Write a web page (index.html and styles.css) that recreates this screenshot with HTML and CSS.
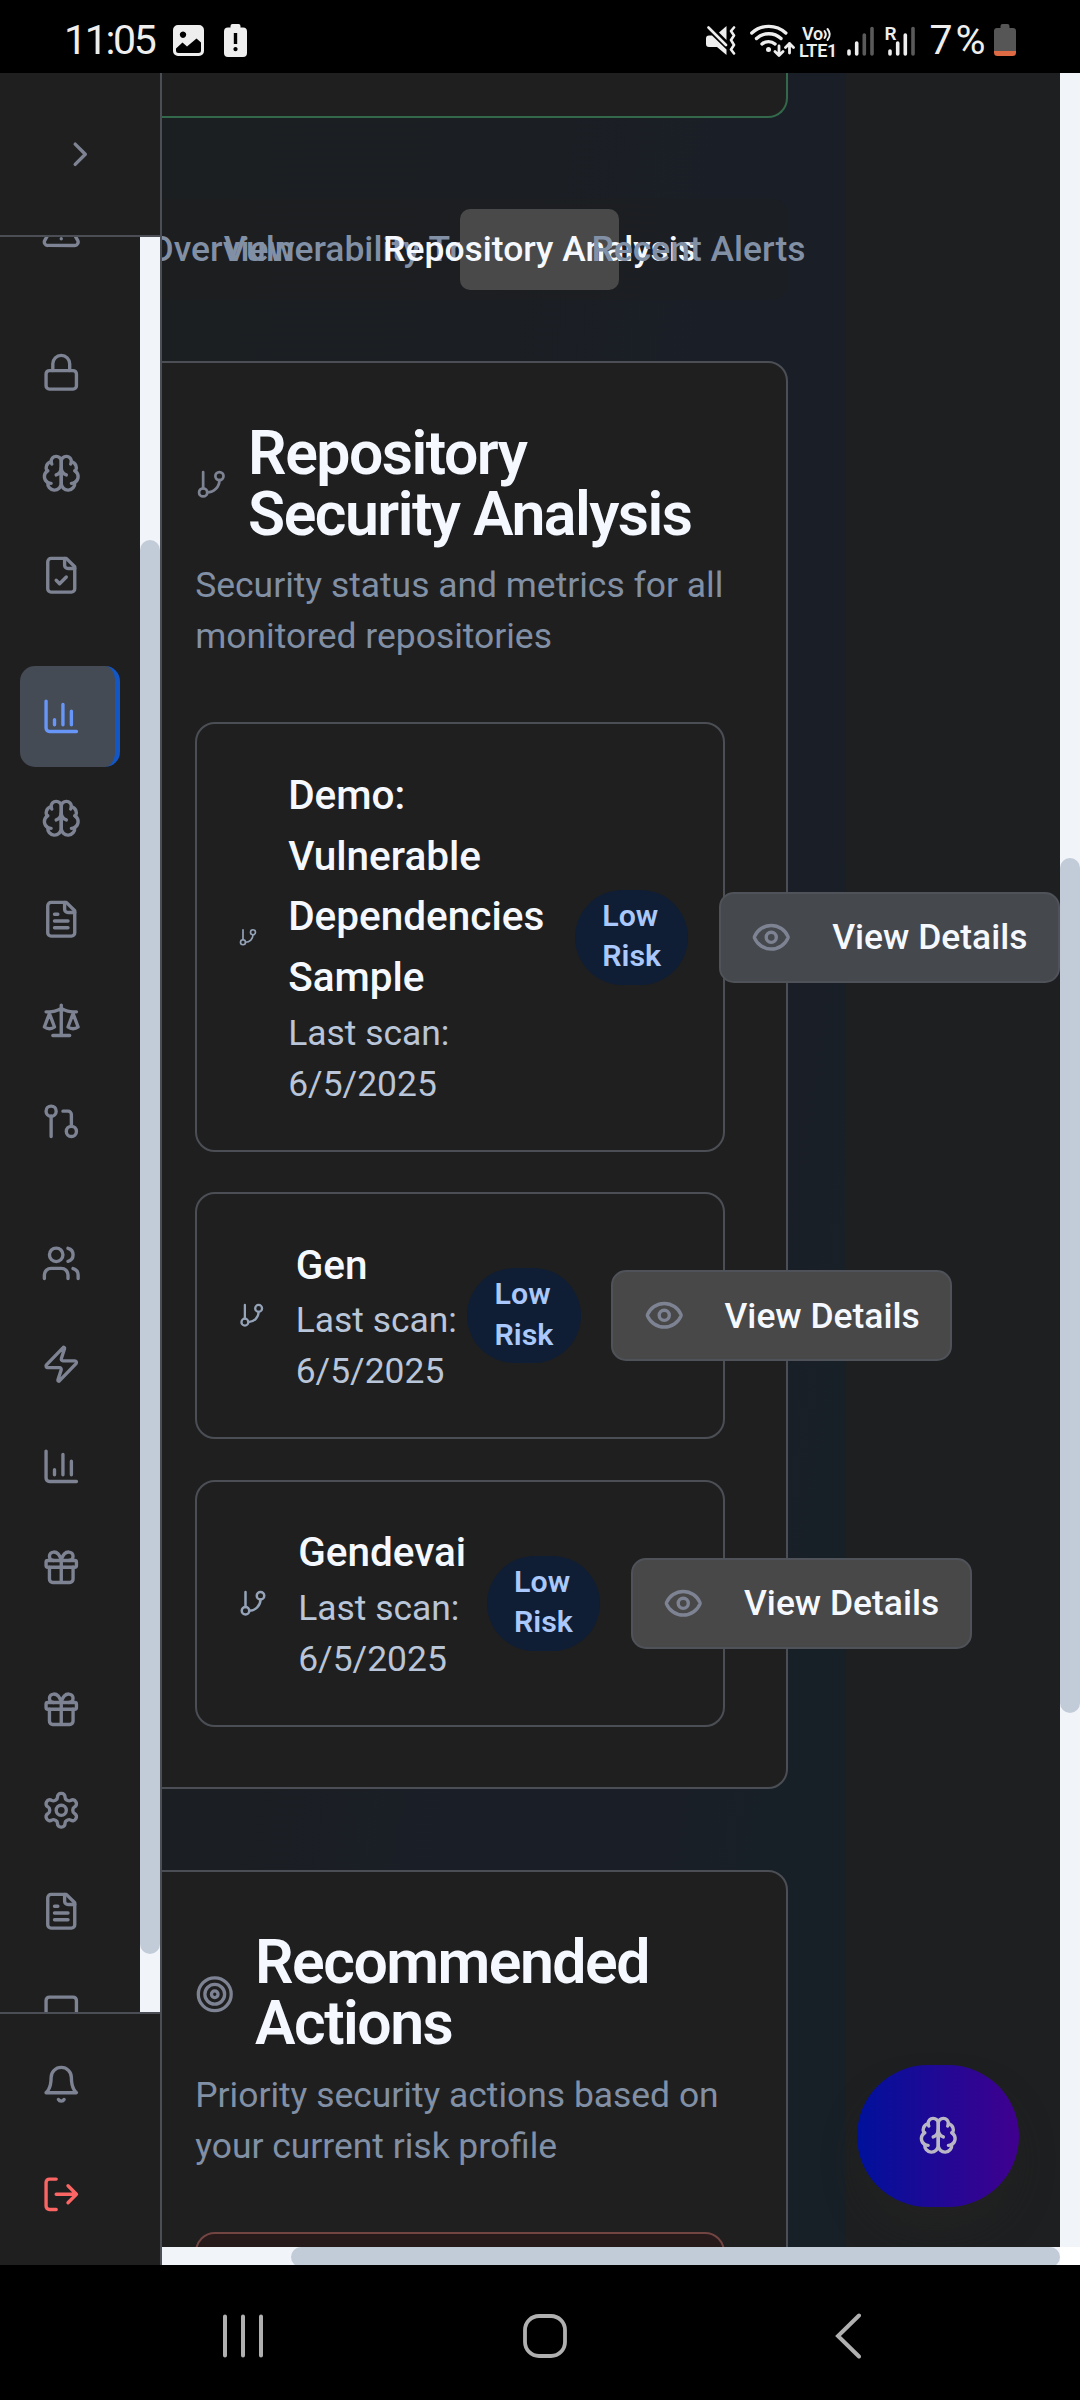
FILE: index.html
```html
<!DOCTYPE html>
<html lang="en">
<head>
<meta charset="utf-8">
<title>Security Dashboard</title>
<link rel="stylesheet" href="styles.css">
</head>
<body>
<svg class="sprite" aria-hidden="true">
  <symbol id="chevron" viewBox="0 0 24 24"><path d="m9 18 6-6-6-6"/></symbol>
  <symbol id="alert" viewBox="0 0 24 24"><path d="m21.73 18-8-14a2 2 0 0 0-3.48 0l-8 14A2 2 0 0 0 4 21h16a2 2 0 0 0 1.73-3M12 9v4M12 17h.01"/></symbol>
  <symbol id="lock" viewBox="0 0 24 24"><rect x="3" y="11" width="18" height="11" rx="2"/><path d="M7 11V7a5 5 0 0 1 10 0v4"/></symbol>
  <symbol id="brain" viewBox="0 0 24 24"><path d="M12 5a3 3 0 1 0-5.997.125 4 4 0 0 0-2.526 5.77 4 4 0 0 0 .556 6.588A4 4 0 1 0 12 18Z"/><path d="M12 5a3 3 0 1 1 5.997.125 4 4 0 0 1 2.526 5.77 4 4 0 0 1-.556 6.588A4 4 0 1 1 12 18Z"/><path d="M15 13a4.5 4.5 0 0 1-3-4 4.5 4.5 0 0 1-3 4M17.599 6.5a3 3 0 0 0 .399-1.375M6.003 5.125A3 3 0 0 0 6.401 6.5M3.477 10.896a4 4 0 0 1 .585-.396M19.938 10.5a4 4 0 0 1 .585.396M6 18a4 4 0 0 1-1.967-.516M19.967 17.484A4 4 0 0 1 18 18"/></symbol>
  <symbol id="file-check" viewBox="0 0 24 24"><path d="M15 2H6a2 2 0 0 0-2 2v16a2 2 0 0 0 2 2h12a2 2 0 0 0 2-2V7Z"/><path d="M14 2v4a2 2 0 0 0 2 2h4M9 15l2 2 4-4"/></symbol>
  <symbol id="chart" viewBox="0 0 24 24"><path d="M3 3v16a2 2 0 0 0 2 2h16M18 17V9M13 17V5M8 17v-3"/></symbol>
  <symbol id="file-text" viewBox="0 0 24 24"><path d="M15 2H6a2 2 0 0 0-2 2v16a2 2 0 0 0 2 2h12a2 2 0 0 0 2-2V7Z"/><path d="M14 2v4a2 2 0 0 0 2 2h4M10 9H8M16 13H8M16 17H8"/></symbol>
  <symbol id="scale" viewBox="0 0 24 24"><path d="m16 16 3-8 3 8c-.87.65-1.92 1-3 1s-2.13-.35-3-1ZM2 16l3-8 3 8c-.87.65-1.92 1-3 1s-2.13-.35-3-1ZM7 21h10M12 3v18M3 7h2c2 0 5-1 7-2 2 1 5 2 7 2h2"/></symbol>
  <symbol id="pull" viewBox="0 0 24 24"><circle cx="18" cy="18" r="3"/><circle cx="6" cy="6" r="3"/><path d="M13 6h3a2 2 0 0 1 2 2v7M6 9v12"/></symbol>
  <symbol id="users" viewBox="0 0 24 24"><path d="M16 21v-2a4 4 0 0 0-4-4H6a4 4 0 0 0-4 4v2"/><circle cx="9" cy="7" r="4"/><path d="M22 21v-2a4 4 0 0 0-3-3.87M16 3.13a4 4 0 0 1 0 7.75"/></symbol>
  <symbol id="zap" viewBox="0 0 24 24"><path d="M4 14a1 1 0 0 1-.78-1.63l9.9-10.2a.5.5 0 0 1 .86.46l-1.92 6.02A1 1 0 0 0 13 10h7a1 1 0 0 1 .78 1.63l-9.9 10.2a.5.5 0 0 1-.86-.46l1.92-6.02A1 1 0 0 0 11 14z"/></symbol>
  <symbol id="gift" viewBox="0 0 24 24"><rect x="3" y="8" width="18" height="4" rx="1"/><path d="M12 8v13M19 12v7a2 2 0 0 1-2 2H7a2 2 0 0 1-2-2v-7M7.5 8a2.5 2.5 0 0 1 0-5A4.8 8 0 0 1 12 8a4.8 8 0 0 1 4.5-5 2.5 2.5 0 0 1 0 5"/></symbol>
  <symbol id="settings" viewBox="0 0 24 24"><path d="M12.22 2h-.44a2 2 0 0 0-2 2v.18a2 2 0 0 1-1 1.73l-.43.25a2 2 0 0 1-2 0l-.15-.08a2 2 0 0 0-2.73.73l-.22.38a2 2 0 0 0 .73 2.73l.15.1a2 2 0 0 1 1 1.72v.51a2 2 0 0 1-1 1.74l-.15.09a2 2 0 0 0-.73 2.73l.22.38a2 2 0 0 0 2.73.73l.15-.08a2 2 0 0 1 2 0l.43.25a2 2 0 0 1 1 1.73V20a2 2 0 0 0 2 2h.44a2 2 0 0 0 2-2v-.18a2 2 0 0 1 1-1.73l.43-.25a2 2 0 0 1 2 0l.15.08a2 2 0 0 0 2.73-.73l.22-.39a2 2 0 0 0-.73-2.73l-.15-.08a2 2 0 0 1-1-1.74v-.5a2 2 0 0 1 1-1.74l.15-.09a2 2 0 0 0 .73-2.73l-.22-.38a2 2 0 0 0-2.73-.73l-.15.08a2 2 0 0 1-2 0l-.43-.25a2 2 0 0 1-1-1.73V4a2 2 0 0 0-2-2z"/><circle cx="12" cy="12" r="3"/></symbol>
  <symbol id="message" viewBox="0 0 24 24"><path d="M21 15a2 2 0 0 1-2 2H7l-4 4V5a2 2 0 0 1 2-2h14a2 2 0 0 1 2 2z"/></symbol>
  <symbol id="bell" viewBox="0 0 24 24"><path d="M6 8a6 6 0 0 1 12 0c0 7 3 9 3 9H3s3-2 3-9M10.3 21a1.94 1.94 0 0 0 3.4 0"/></symbol>
  <symbol id="logout" viewBox="0 0 24 24"><path d="M9 21H5a2 2 0 0 1-2-2V5a2 2 0 0 1 2-2h4M16 17l5-5-5-5M21 12H9"/></symbol>
  <symbol id="branch" viewBox="0 0 24 24"><path d="M6 3v12M18 9a9 9 0 0 1-9 9"/><circle cx="18" cy="6" r="3"/><circle cx="6" cy="18" r="3"/></symbol>
  <symbol id="eye" viewBox="0 0 24 24"><path d="M2.062 12.348a1 1 0 0 1 0-.696 10.75 10.75 0 0 1 19.876 0 1 1 0 0 1 0 .696 10.75 10.75 0 0 1-19.876 0"/><circle cx="12" cy="12" r="3"/></symbol>
  <symbol id="target" viewBox="0 0 24 24"><circle cx="12" cy="12" r="10"/><circle cx="12" cy="12" r="6"/><circle cx="12" cy="12" r="2"/></symbol>
</svg>

<header class="statusbar">
  <div class="status-left">
    <span class="clock">11:05</span>
    <svg class="s-image" viewBox="0 0 31 31"><path fill="#eee" fill-rule="evenodd" d="M5 0H26a5 5 0 0 1 5 5V26a5 5 0 0 1-5 5H5a5 5 0 0 1-5-5V5a5 5 0 0 1 5-5ZM3 23.500V25.500a2.500 2.500 0 0 0 2.500 2.500H25.500a2.500 2.500 0 0 0 2.500-2.500V17.500L23.500 13.500 14 21.500 9.500 17.500ZM10 6.500a3.200 3.200 0 1 0 .01 0Z"/></svg>
    <svg class="s-batt" viewBox="0 0 23 33"><path fill="#eee" fill-rule="evenodd" d="M8.500 0h6a2 2 0 0 1 2 2v1.500H19a4 4 0 0 1 4 4V29a4 4 0 0 1-4 4H4a4 4 0 0 1-4-4V7.500a4 4 0 0 1 4-4H6.500V2a2 2 0 0 1 2-2ZM9.800 9v11h3.400V9ZM11.500 23a2.100 2.100 0 1 0 .01 0Z"/></svg>
  </div>
  <div class="status-right">
    <svg class="s-mute" viewBox="0 0 30 30"><g fill="#eee"><path d="M3 9.500H6L20.500 23.500V29L11 21H3a3 3 0 0 1-3-3v-5.500a3 3 0 0 1 3-3Z"/><path d="M13 6.500 20.500 0V14Z"/></g><g fill="none" stroke="#eee" stroke-width="2.600" stroke-linecap="round" stroke-linejoin="round"><path d="M2.500 1.500 20 19M28 1.500l-3 3.500 3 4.500-3 4.500 3 5-3 4.500 3 4"/></g></svg>
    <svg class="s-wifi" viewBox="0 0 45 33"><g fill="none" stroke="#eee" stroke-width="3.400" stroke-linecap="round"><path d="M1.800 9a25 25 0 0 1 34 0M6.500 14.500a18 18 0 0 1 24.500 0M12 20a10 10 0 0 1 13 0"/></g><circle cx="18.500" cy="25.500" r="2.500" fill="#eee"/><g fill="none" stroke="#eee" stroke-width="2.800" stroke-linecap="round" stroke-linejoin="round"><path d="M29 22v9.500M25 27.500l4 4 4-4M39.500 29V19.500M35.500 23.500l4-4 4 4"/></g></svg>
    <div class="volte"><span>Vo<svg viewBox="0 0 11 16"><path d="M1.500 5q2.500 3.500 0 7M4.500 3q4.500 5.500 0 11" fill="none" stroke="#eee" stroke-width="2" stroke-linecap="round"/></svg></span><span>LTE1</span></div>
    <svg class="s-sig1" viewBox="0 0 27 30"><g stroke-width="3.600" stroke-linecap="round"><path stroke="#eee" d="M2 25v3M9.700 17v11"/><path stroke="#5a5a5a" d="M17.300 9v19M25 2.500V28"/></g></svg>
    <div class="roam"><span>R</span><svg viewBox="0 0 27 30"><g stroke-width="3.600" stroke-linecap="round"><path stroke="#eee" d="M2 25v3M9.700 17v11M17.300 9v19"/><path stroke="#5a5a5a" d="M25 2.500V28"/></g></svg></div>
    <span class="percent">7%</span>
    <svg class="s-power" viewBox="0 0 22 32"><path fill="#565656" d="M8.500 0h5a2 2 0 0 1 2 2v2H19a3 3 0 0 1 3 3V27H0V7a3 3 0 0 1 3-3H6.500V2a2 2 0 0 1 2-2Z"/><path fill="#de6b43" d="M0 27H22v1.500a3.500 3.500 0 0 1-3.500 3.500H3.500A3.500 3.500 0 0 1 0 28.500Z"/></svg>
  </div>
</header>

<div class="app">
  <aside class="sidebar">
    <div class="sidebar-head"><svg class="icon"><use href="#chevron"/></svg></div>
    <div class="sidebar-scroll">
      <nav class="nav">
        <div class="group"><a class="item"><svg class="icon"><use href="#alert"/></svg></a></div>
        <div class="group">
          <a class="item"><svg class="icon"><use href="#lock"/></svg></a>
          <a class="item"><svg class="icon"><use href="#brain"/></svg></a>
          <a class="item"><svg class="icon"><use href="#file-check"/></svg></a>
        </div>
        <div class="group">
          <a class="item active"><svg class="icon"><use href="#chart"/></svg></a>
          <a class="item"><svg class="icon"><use href="#brain"/></svg></a>
          <a class="item"><svg class="icon"><use href="#file-text"/></svg></a>
          <a class="item"><svg class="icon"><use href="#scale"/></svg></a>
          <a class="item"><svg class="icon"><use href="#pull"/></svg></a>
        </div>
        <div class="group">
          <a class="item"><svg class="icon"><use href="#users"/></svg></a>
          <a class="item"><svg class="icon"><use href="#zap"/></svg></a>
          <a class="item"><svg class="icon"><use href="#chart"/></svg></a>
          <a class="item"><svg class="icon"><use href="#gift"/></svg></a>
        </div>
        <div class="group">
          <a class="item"><svg class="icon"><use href="#gift"/></svg></a>
          <a class="item"><svg class="icon"><use href="#settings"/></svg></a>
          <a class="item"><svg class="icon"><use href="#file-text"/></svg></a>
          <a class="item"><svg class="icon"><use href="#message"/></svg></a>
        </div>
      </nav>
      <div class="track"><div class="thumb nav-thumb"></div></div>
    </div>
    <div class="sidebar-foot">
      <a class="item"><svg class="icon"><use href="#bell"/></svg></a>
      <a class="item logout"><svg class="icon"><use href="#logout"/></svg></a>
    </div>
  </aside>

  <div class="viewport">
    <div class="pane">
      <main class="main">
        <div class="page">
          <section class="card card-ok"></section>
          <div class="tabs">
            <button class="tab">Overview</button>
            <button class="tab">Vulnerability Trends</button>
            <button class="tab selected">Repository Analysis</button>
            <button class="tab">Recent Alerts</button>
          </div>

          <section class="card card-repos">
            <div class="card-title">
              <svg class="icon title-branch"><use href="#branch"/></svg>
              <h3>Repository<br>Security Analysis</h3>
            </div>
            <p class="card-desc">Security status and metrics for all monitored repositories</p>
            <div class="repos">
              <article class="repo repo-demo">
                <div class="info">
                  <svg class="icon"><use href="#branch"/></svg>
                  <div class="text"><h4>Demo: Vulnerable Dependencies Sample</h4><p>Last scan: 6/5/2025</p></div>
                </div>
                <span class="badge">Low<br>Risk</span>
                <button class="details focused"><svg class="icon"><use href="#eye"/></svg>View Details</button>
              </article>
              <article class="repo repo-gen">
                <div class="info">
                  <svg class="icon"><use href="#branch"/></svg>
                  <div class="text"><h4>Gen</h4><p>Last scan: 6/5/2025</p></div>
                </div>
                <span class="badge">Low<br>Risk</span>
                <button class="details"><svg class="icon"><use href="#eye"/></svg>View Details</button>
              </article>
              <article class="repo repo-gendevai">
                <div class="info">
                  <svg class="icon"><use href="#branch"/></svg>
                  <div class="text"><h4>Gendevai</h4><p>Last scan: 6/5/2025</p></div>
                </div>
                <span class="badge">Low<br>Risk</span>
                <button class="details"><svg class="icon"><use href="#eye"/></svg>View Details</button>
              </article>
            </div>
          </section>

          <section class="card card-actions">
            <div class="card-title">
              <svg class="icon title-target"><use href="#target"/></svg>
              <h3>Recommended Actions</h3>
            </div>
            <p class="card-desc">Priority security actions based on your current risk profile</p>
            <div class="action"></div>
          </section>
        </div>
        <button class="fab"><svg class="icon"><use href="#brain"/></svg></button>
      </main>
      <div class="track main-track"><div class="thumb main-thumb"></div></div>
    </div>
    <div class="hbar"><div class="htrack"><div class="hthumb"></div></div></div>
  </div>
</div>

<footer class="navbar">
  <svg class="n-recents" viewBox="0 0 40 44"><path stroke="#b0b0b0" stroke-width="4" stroke-linecap="round" d="M2 2.500V41.500M20 2.500V41.500M38 2.500V41.500"/></svg>
  <svg class="n-home" viewBox="0 0 44 44"><rect x="2" y="2" width="40" height="40" rx="14" fill="none" stroke="#b0b0b0" stroke-width="3.800"/></svg>
  <svg class="n-back" viewBox="0 0 26 46"><path fill="none" stroke="#b0b0b0" stroke-width="4" stroke-linecap="round" d="M24 2.500 3 23 24 43.500"/></svg>
</footer>
</body>
</html>
```
FILE: styles.css
```css
/* 1rem = 16 dp at the phone's 2.53 density */
html { font-size: 40.5px; }
* { box-sizing: border-box; }
body {
  margin: 0;
  width: 1080px;
  height: 2400px;
  overflow: hidden;
  display: flex;
  flex-direction: column;
  background: #000;
  font-family: Roboto, "Liberation Sans", sans-serif;
  color: #f5f9ff;
}
h3, h4, p { margin: 0; }
button { font: inherit; color: inherit; border: 0; padding: 0; margin: 0; background: none; }
.sprite { position: absolute; width: 0; height: 0; }
.icon {
  width: 1rem;
  height: 1rem;
  flex: none;
  display: block;
  fill: none;
  stroke: #7e8393;
  stroke-width: 2;
  stroke-linecap: round;
  stroke-linejoin: round;
}

/* status bar */
.statusbar {
  height: 73px;
  flex: none;
  display: flex;
  justify-content: space-between;
  padding: 0 64px 0 64px;
  color: #eee;
}
.statusbar svg { display: block; flex: none; }
.status-left, .status-right { display: flex; align-items: flex-start; }
.clock { width: 109px; font-size: 41px; line-height: 47px; letter-spacing: -2.300px; margin-top: 17px; }
.s-image { width: 31px; height: 31px; margin-top: 25px; }
.s-batt { width: 23px; height: 33px; margin: 24px 0 0 20px; }
.s-mute { width: 30px; height: 30px; margin: 26px 14px 0 0; }
.s-wifi { width: 45px; height: 33px; margin: 24px 5px 0 0; }
.volte { width: 37px; margin: 25px 10px 0 0; font-size: 18px; line-height: 17px; font-weight: 600; }
.volte span { display: flex; align-items: center; white-space: nowrap; justify-content: center; letter-spacing: -.300px; }
.volte svg { width: 11px; height: 16px; }
.s-sig1 { width: 27px; height: 30px; margin: 26px 11px 0 0; }
.roam { width: 30px; height: 30px; margin: 26px 15px 0 0; display: grid; justify-items: end; }
.roam span { grid-area: 1 / 1; justify-self: start; font-size: 19px; line-height: 15px; font-weight: 600; z-index: 1; background: #000; height: 15px; }
.roam svg { grid-area: 1 / 1; width: 27px; height: 30px; }
.percent { width: 64.500px; font-size: 41px; line-height: 47px; letter-spacing: 3px; margin-top: 17px; }
.s-power { width: 22px; height: 32px; margin-top: 24px; }

.app { height: 2192px; flex: none; display: flex; }

/* sidebar */
.sidebar {
  width: 162px;
  flex: none;
  display: flex;
  flex-direction: column;
  background: #1f1f1f;
  border-right: 2px solid #4b4f55;
}
.sidebar-head {
  height: 164px;
  flex: none;
  display: flex;
  align-items: center;
  justify-content: center;
  border-bottom: 2px solid #4b4f55;
}
.sidebar-scroll { flex: 1; min-height: 0; display: flex; overflow: hidden; }
.nav { flex: 1; display: flex; flex-direction: column; gap: 1rem; margin-top: -57px; padding: 0 20px; }
.item { display: flex; align-items: center; height: 2.5rem; width: 100px; padding-left: 21px; border-radius: 15px; }
.active { background: #454b54; border-right: 5px solid #1257c5; }
.active .icon { stroke: #6796f8; }
.sidebar-foot {
  height: 253px;
  flex: none;
  display: flex;
  flex-direction: column;
  gap: .25rem;
  padding: 21px 20px;
  border-top: 2px solid #4b4f55;
}
.logout .icon { stroke: #fb6564; }

/* scrollbars */
.track { width: 20px; flex: none; background: #f1f4f9; }
.thumb { background: #c2ccd9; border-radius: 10px; }
.nav-thumb { height: 1414px; margin-top: 303px; }
.main-track { overflow: hidden; }
.main-thumb { height: 855px; margin-top: 785px; }
.hbar { height: 18px; flex: none; background: #fff; overflow: hidden; }
.htrack { width: 898px; height: 20px; background: #f1f4f9; padding-left: 129px; }
.hthumb { height: 20px; border-radius: 10px; background: #c2ccd9; }

/* main area */
.viewport { width: 918px; display: flex; flex-direction: column; }
.pane { height: 2174px; flex: none; display: flex; }
.main { width: 898px; flex: none; position: relative; overflow: hidden; background: #1e1f20; }
.page {
  width: 713.500px;
  margin-left: -29.500px;
  height: 2174px;
  padding-right: 58px;
  background: linear-gradient(100deg, #1b1f22 0%, #1b1f23 35%, #1a1e27 60%, #1a1e27 74%, #182027 86%);
}
.card { background: #1f1f1f; border: 2px solid #4b4f55; border-radius: 20px; padding: 1.5rem; }
.card-ok { height: 45px; padding: 0; border-color: #33694a; border-top: 0; border-radius: 0 0 20px 20px; }
.tabs {
  height: 2.5rem;
  margin-top: 2rem;
  padding: .25rem;
  display: grid;
  grid-template-columns: repeat(4, minmax(0, 1fr));
  border-radius: 15px;
  background: rgba(30, 31, 31, .4);
}
.tab {
  display: flex;
  align-items: center;
  justify-content: center;
  white-space: nowrap;
  font-size: .875rem;
  line-height: 1.25rem;
  font-weight: 500;
  color: #8290a6;
  border-radius: 10px;
}
.selected { background: #494949; color: #f5f9ff; }
.card-repos { margin-top: 1.5rem; }
.card-actions { margin-top: 2rem; height: 800px; }
.card-title { display: flex; align-items: center; gap: .5rem; }
.card-title h3 { font-size: 1.5rem; line-height: 1; font-weight: 600; letter-spacing: -.025em; }
.title-branch { width: 32.600px; }
.title-target { width: 39.500px; }
.card-desc { margin-top: .375rem; font-size: .875rem; line-height: 1.25rem; color: #8290a6; }
.repos { margin-top: 1.5rem; display: flex; flex-direction: column; gap: 1rem; }
.repo { display: flex; align-items: center; padding: 1rem; border: 2px solid #4b4f55; border-radius: 20px; }
.info { flex: none; display: flex; align-items: center; gap: .75rem; }
.info .icon { stroke: #94a3b8; }
.repo-demo .info { width: 337.200px; }
.repo-demo .info .icon { width: 20px; }
.repo-gen .info { width: 229.500px; }
.repo-gen .info .icon { width: 27.500px; }
.repo-gendevai .info { width: 249px; }
.repo-gendevai .info .icon { width: 30px; }
.text { flex: 1; min-width: 0; }
.text h4 { font-size: 1rem; line-height: 1.5rem; font-weight: 500; }
.text p { font-size: .875rem; line-height: 1.25rem; color: #b9c5d8; }
.badge {
  flex: none;
  width: 113.500px;
  padding: 4px .625rem 6px;
  border: 2px solid transparent;
  border-radius: 48px;
  font-size: .75rem;
  line-height: 1rem;
  font-weight: 600;
  color: #aac8fb;
  background: #0f1e34;
}
.details {
  flex: none;
  display: flex;
  align-items: center;
  gap: 1rem;
  width: 341px;
  height: 2.25rem;
  margin-left: .75rem;
  padding-left: .75rem;
  border: 2px solid #4f5359;
  border-radius: 15px;
  background: #484848;
  font-size: .875rem;
  font-weight: 500;
  white-space: nowrap;
}
.focused { background: #45484c; }
.action { margin-top: 1.5rem; height: 300px; border: 2px solid #724442; border-radius: 20px; background: #271a1a; }
.fab {
  position: absolute;
  right: 41px;
  bottom: 1rem;
  width: 4rem;
  height: 3.5rem;
  border-radius: 2rem;
  display: flex;
  align-items: center;
  justify-content: center;
  background: linear-gradient(to right, #00119b, #40008f);
  box-shadow: 0 25px 38px -8px rgba(36, 36, 35, .6);
}
.fab .icon { stroke: #b9b6c6; }

/* system navigation */
.navbar { height: 135px; flex: none; display: flex; align-items: flex-start; padding: 49px 0 0 223px; }
.n-recents { width: 40px; height: 44px; }
.n-home { width: 44px; height: 44px; margin-left: 260px; }
.n-back { width: 26px; height: 46px; margin: -1px 0 0 268px; }
```
